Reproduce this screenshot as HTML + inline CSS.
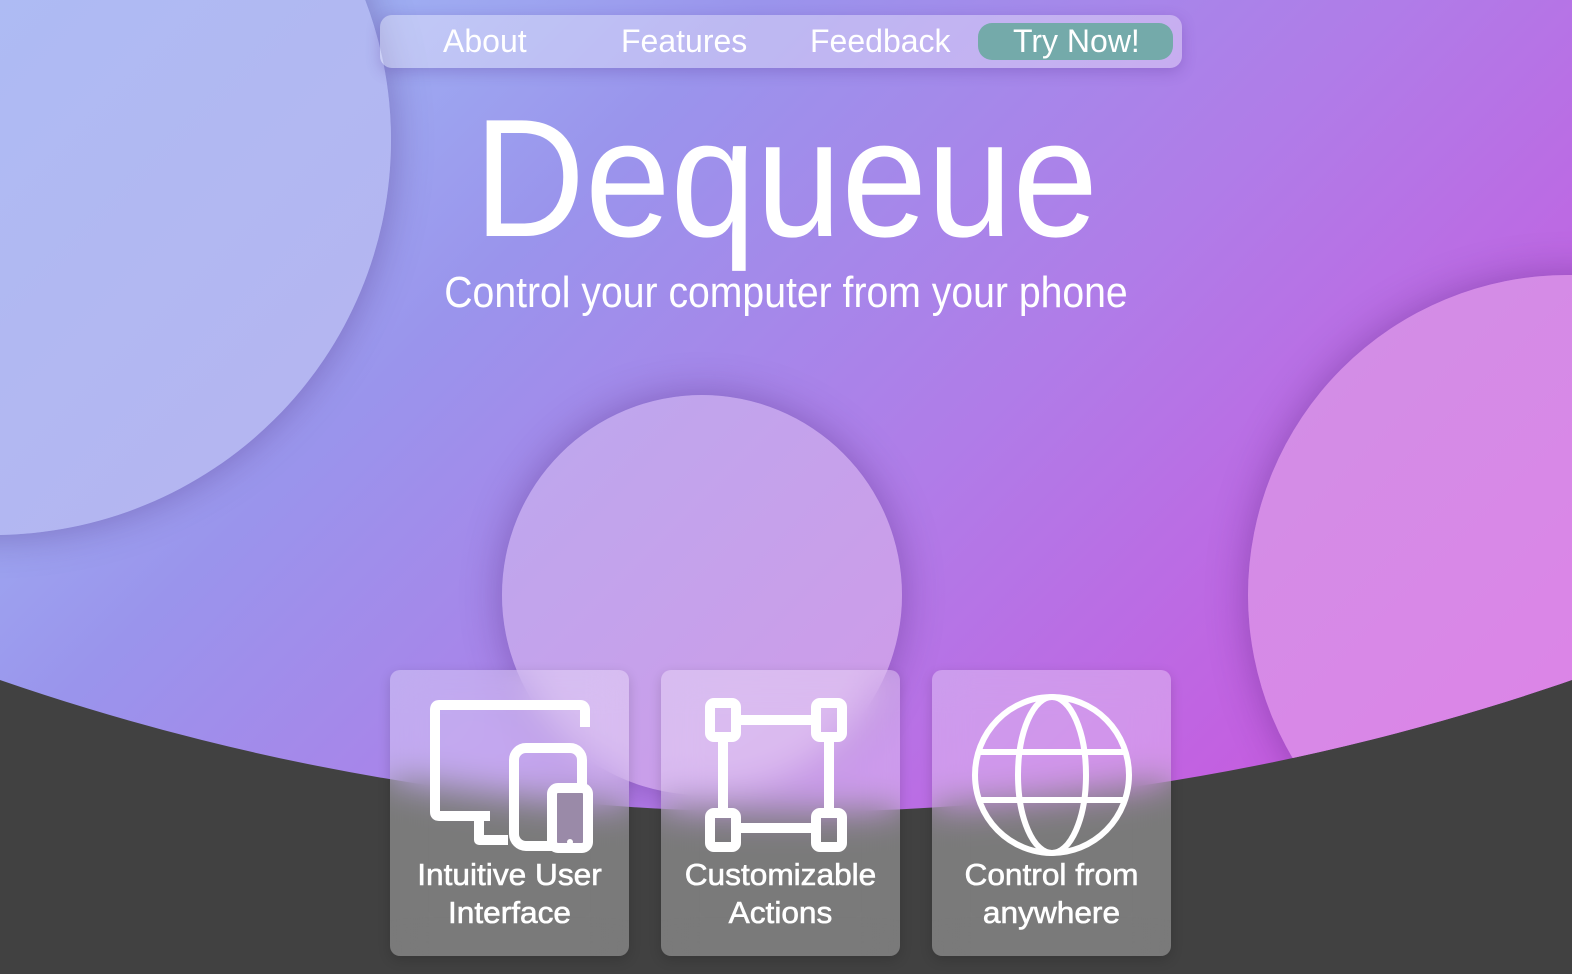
<!DOCTYPE html>
<html><head><style>
html,body{margin:0;padding:0;width:1572px;height:974px;overflow:hidden;background:#414141;font-family:"Liberation Sans",sans-serif;}
#bg{position:absolute;left:0;top:0;width:1572px;height:974px;clip-path:circle(2406px at 786px -1594px);
background:linear-gradient(135deg,#a3c8f8 0%,#9a94ec 30%,#b07ce8 55%,#c45ee0 80%,#d060e0 100%);overflow:hidden}
.c{position:absolute;border-radius:50%;box-shadow:0 0 40px rgba(60,20,100,.35)}
#nav{position:absolute;left:380px;top:15px;width:802px;height:53px;border-radius:12px;background:rgba(255,255,255,.35);box-shadow:0 4px 14px rgba(80,40,140,.25)}
#nav span{position:absolute;top:8px;color:#fff;font-size:32px;transform:scaleX(1.0);transform-origin:left}
#try{position:absolute;left:598px;top:8px;width:195px;height:37px;border-radius:14px;background:#74aaaa}
h1{position:absolute;left:0;width:1572px;top:82px;margin:0;text-align:center;color:#fff;font-weight:normal;font-size:168px;transform:scaleX(.915);letter-spacing:0}
#sub{position:absolute;left:0;width:1572px;top:268px;text-align:center;color:#fff;font-size:44px;transform:scaleX(.89)}
.card{position:absolute;top:670px;width:239px;height:286px;border-radius:10px;background:rgba(255,255,255,.3);backdrop-filter:blur(18px);box-shadow:0 4px 12px rgba(0,0,0,.15)}
.card svg{position:absolute;left:0;top:0}
.card .t{position:absolute;left:0;width:239px;top:186px;text-align:center;color:#fff;font-size:31px;line-height:38px;transform:scaleX(1.02);-webkit-text-stroke:0.6px #fff}
</style></head><body>
<div id="bg">
<div class="c" style="left:-405px;top:-255px;width:796px;height:790px;background:linear-gradient(135deg,#a8c0f6,#b6b4f0)"></div>
<div class="c" style="left:502px;top:395px;width:400px;height:400px;background:linear-gradient(135deg,#bca8ee,#d09ae8)"></div>
<div class="c" style="left:1248px;top:275px;width:640px;height:640px;background:linear-gradient(135deg,#d090e6,#e47ce8)"></div>
</div>
<div id="nav">
<span style="left:63px">About</span>
<span style="left:241px">Features</span>
<span style="left:430px">Feedback</span>
<div id="try"></div>
<span style="left:633px">Try Now!</span>
</div>
<h1>Dequeue</h1>
<div id="sub">Control your computer from your phone</div>

<div class="card" style="left:390px">
<svg width="239" height="200" viewBox="0 0 239 200" fill="none" stroke="#fff" stroke-width="10" stroke-linejoin="round">
<path d="M195 57 V40 Q195 35 190 35 H49 Q45 35 45 40 V142 Q45 146 49 146 H100"/>
<rect x="124" y="78" width="68" height="98" rx="12"/>
<rect x="162" y="118" width="36" height="60" rx="6" fill="#9a8aa8"/>
<path d="M89 146 V170 H118" />
<circle cx="180" cy="172" r="3" fill="#fff" stroke="none"/>
</svg>
<div class="t">Intuitive User<br>Interface</div>
</div>
<div class="card" style="left:661px">
<svg width="239" height="200" viewBox="0 0 239 200" fill="none" stroke="#fff" stroke-width="10">
<rect x="49" y="33" width="26" height="34" rx="4"/>
<rect x="155" y="33" width="26" height="34" rx="4"/>
<rect x="49" y="143" width="26" height="34" rx="4"/>
<rect x="155" y="143" width="26" height="34" rx="4"/>
<path d="M75 50 H155 M75 158 H155 M62 67 V143 M168 67 V143"/>
</svg>
<div class="t">Customizable<br>Actions</div>
</div>
<div class="card" style="left:932px">
<svg width="239" height="200" viewBox="0 0 239 200" fill="none" stroke="#fff" stroke-width="6">
<ellipse cx="120" cy="105" rx="77" ry="78"/>
<ellipse cx="120" cy="105" rx="34" ry="78"/>
<path d="M46 82 H194 M46 130 H194"/>
</svg>
<div class="t">Control from<br>anywhere</div>
</div>
</body></html>
